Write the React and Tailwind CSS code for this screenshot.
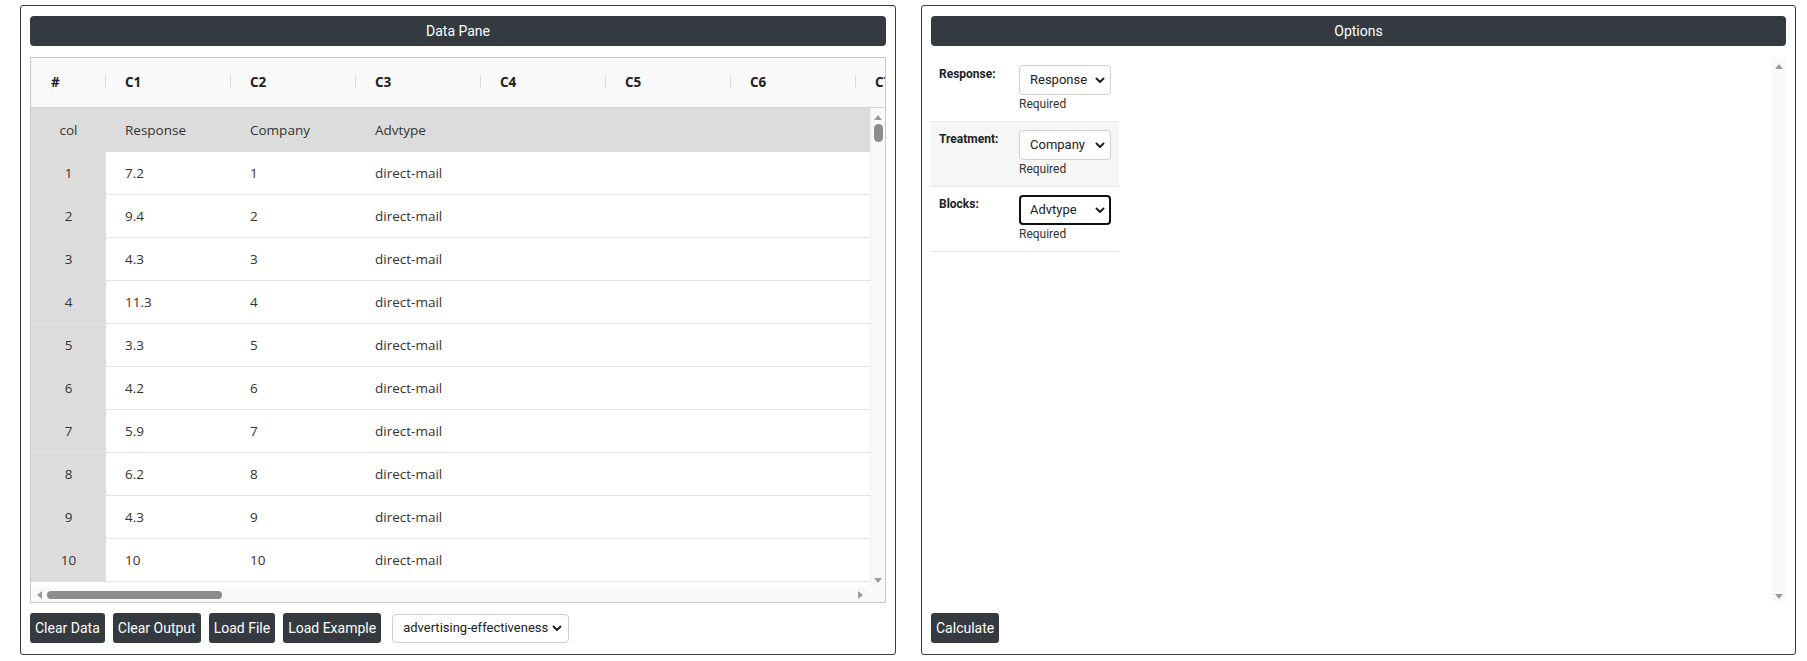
import React from 'react';

const rows = [
  ['1', '7.2', '1', 'direct-mail'],
  ['2', '9.4', '2', 'direct-mail'],
  ['3', '4.3', '3', 'direct-mail'],
  ['4', '11.3', '4', 'direct-mail'],
  ['5', '3.3', '5', 'direct-mail'],
  ['6', '4.2', '6', 'direct-mail'],
  ['7', '5.9', '7', 'direct-mail'],
  ['8', '6.2', '8', 'direct-mail'],
  ['9', '4.3', '9', 'direct-mail'],
  ['10', '10', '10', 'direct-mail'],
];

const headers = ['C1', 'C2', 'C3', 'C4', 'C5', 'C6', 'C7'];

// small scrollbar arrow triangles
const Arrow = ({ dir }) => {
  const pts = {
    up: '0,5 4,0 8,5',
    down: '0,0 8,0 4,5',
    left: '5,0 5,8 0,4',
    right: '0,0 0,8 5,4',
  }[dir];
  const vertical = dir === 'up' || dir === 'down';
  return (
    <svg width={vertical ? 8 : 5} height={vertical ? 5 : 8} viewBox={vertical ? '0 0 8 5' : '0 0 5 8'}>
      <polygon points={pts} fill="#9c9c9c" />
    </svg>
  );
};

const Chevron = () => (
  <svg width="10" height="7" viewBox="0 0 10 7">
    <polyline points="1.5,1.5 5,5 8.5,1.5" fill="none" stroke="#222" strokeWidth="2" strokeLinecap="round" strokeLinejoin="round" />
  </svg>
);

const PaneTitle = ({ children }) => (
  <div className="h-[30px] rounded-[4px] bg-[#343a40] text-white text-[14px] flex items-center justify-center">
    {children}
  </div>
);

const DarkButton = ({ children }) => (
  <button className="h-[30px] px-[5px] rounded-[3px] bg-[#343a40] text-white text-[14px] leading-none">
    {children}
  </button>
);

const FakeSelect = ({ value, focused, className = '' }) => (
  <div
    className={`h-[30px] rounded-[4px] bg-white flex items-center justify-between text-[13px] text-[#222] ${
      focused ? 'border-2 border-[#111] pl-[9px] pr-[4px]' : 'border border-[#cfcfcf] pl-[10px] pr-[5px]'
    } ${className}`}
  >
    <span>{value}</span>
    <Chevron />
  </div>
);

const DataTable = () => (
  <div className="h-[546px] border border-[#c8c8c8] flex flex-col overflow-hidden font-['Open_Sans',sans-serif] text-[13.5px] text-[#333]">
    {/* column header row */}
    <div className="h-[50px] shrink-0 flex bg-[#f9f9f9] border-b border-[#d4d4d4] overflow-hidden">
      <div className="w-[75px] shrink-0 relative flex items-center pl-[20px] font-bold text-[#222]">
        #
        <span className="absolute right-0 top-[17px] h-[14px] w-px bg-[#dedede]" />
      </div>
      {headers.map((h) => (
        <div key={h} className="w-[125px] shrink-0 relative flex items-center pl-[19px] font-bold text-[#222]">
          {h}
          <span className="absolute right-0 top-[17px] h-[14px] w-px bg-[#dedede]" />
        </div>
      ))}
    </div>

    {/* body with scrollbars */}
    <div className="flex flex-1 min-h-0">
      <div className="flex-1 min-w-0 overflow-hidden bg-white">
        <div className="h-[44px] flex bg-[#dcdcdc]">
          <div className="w-[75px] shrink-0 flex items-center justify-center">col</div>
          <div className="w-[125px] shrink-0 flex items-center pl-[19px]">Response</div>
          <div className="w-[125px] shrink-0 flex items-center pl-[19px]">Company</div>
          <div className="w-[125px] shrink-0 flex items-center pl-[19px]">Advtype</div>
        </div>
        {rows.map((r) => (
          <div key={r[0]} className="h-[43px] flex border-b border-[#e2e2e2]">
            <div className="w-[75px] shrink-0 flex items-center justify-center bg-[#dcdcdc]">{r[0]}</div>
            <div className="w-[125px] shrink-0 flex items-center pl-[19px]">{r[1]}</div>
            <div className="w-[125px] shrink-0 flex items-center pl-[19px]">{r[2]}</div>
            <div className="w-[125px] shrink-0 flex items-center pl-[19px]">{r[3]}</div>
            <div className="flex-1" />
          </div>
        ))}
      </div>
      <div className="w-[15px] shrink-0 bg-[#fafafa] border-l border-[#efefef] flex flex-col items-center pt-[7px] pb-[4px]">
        <Arrow dir="up" />
        <div className="mt-[4px] w-[9px] h-[18px] rounded-full bg-[#8c8c8c]" />
        <div className="flex-1" />
        <Arrow dir="down" />
      </div>
    </div>
    <div className="h-[15px] shrink-0 flex items-center bg-[#fafafa]">
      <div className="w-[838px] flex items-center pl-[6px] pr-[6px]">
        <Arrow dir="left" />
        <div className="ml-[5px] w-[175px] h-[8px] rounded-full bg-[#8c8c8c]" />
        <div className="flex-1" />
        <Arrow dir="right" />
      </div>
    </div>
  </div>
);

const optionRows = [
  { label: 'Response:', value: 'Response', bg: 'bg-white' },
  { label: 'Treatment:', value: 'Company', bg: 'bg-[#f6f6f6]' },
  { label: 'Blocks:', value: 'Advtype', bg: 'bg-white', focused: true },
];

const OptionsList = () => (
  <div className="w-[188px]">
    {optionRows.map((o) => (
      <div key={o.label} className={`h-[65px] flex border-b border-[#e6e6e6] ${o.bg}`}>
        <div className="w-[88px] shrink-0 pl-[8px] pt-[9px] text-[12px] leading-[16px] font-bold text-[#222]">
          {o.label}
        </div>
        <div className="pt-[8px]">
          <FakeSelect value={o.value} focused={o.focused} className="w-[92px]" />
          <div className="text-[12px] leading-[16px] text-[#333] mt-px">Required</div>
        </div>
      </div>
    ))}
  </div>
);

export default function App() {
  return (
    <div className="w-[1807px] h-[661px] bg-white pt-[5px] pl-[20px] flex gap-[25px] font-['Roboto',sans-serif]">
      {/* left: data pane */}
      <div className="w-[876px] h-[650px] border border-[#3a3a3a] rounded-[3px] px-[9px] pt-[10px] flex flex-col">
        <PaneTitle>Data Pane</PaneTitle>
        <div className="mt-[11px]">
          <DataTable />
        </div>
        <div className="mt-[10px] flex items-center gap-[8px]">
          <DarkButton>Clear Data</DarkButton>
          <DarkButton>Clear Output</DarkButton>
          <DarkButton>Load File</DarkButton>
          <DarkButton>Load Example</DarkButton>
          <div className="ml-[3px] w-[177px] h-[29px] border border-[#cfcfcf] rounded-[4px] flex items-center justify-between pl-[10px] pr-[6px] text-[13px] text-[#222]">
            <span>advertising-effectiveness</span>
            <Chevron />
          </div>
        </div>
      </div>

      {/* right: options */}
      <div className="w-[875px] h-[650px] border border-[#3a3a3a] rounded-[3px] px-[9px] pt-[10px] flex flex-col">
        <PaneTitle>Options</PaneTitle>
        <div className="mt-[11px] h-[546px] flex">
          <div className="flex-1 min-w-0 overflow-hidden">
            <OptionsList />
          </div>
          <div className="w-[14px] shrink-0 bg-[#fafafa] flex flex-col items-center pt-[7px] pb-[4px]">
            <Arrow dir="up" />
            <div className="flex-1" />
            <Arrow dir="down" />
          </div>
        </div>
        <div className="mt-[10px] flex">
          <DarkButton>Calculate</DarkButton>
        </div>
      </div>
    </div>
  );
}
